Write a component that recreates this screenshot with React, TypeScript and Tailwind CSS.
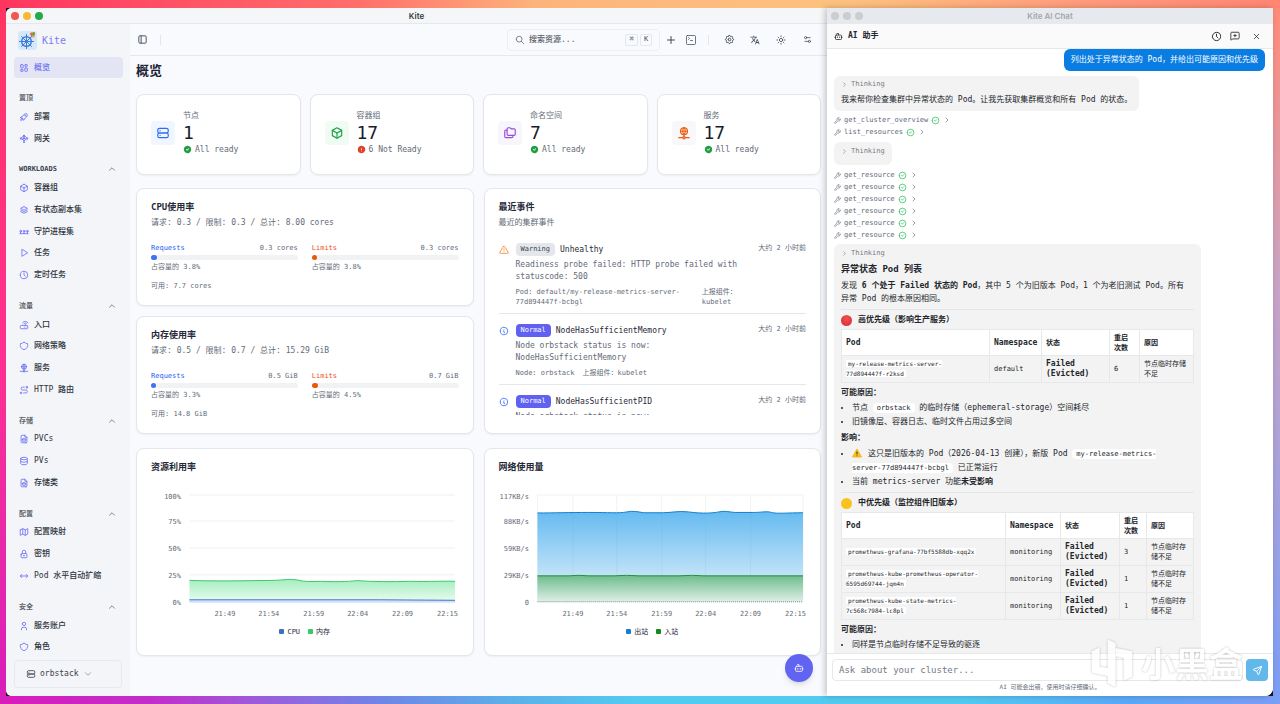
import type { ReactNode } from "react"
import type { IconType } from "react-icons"
import {
    TbAlertTriangle,
    TbArrowsHorizontal,
    TbBox,
    TbChevronDown,
    TbChevronRight,
    TbChevronUp,
    TbCircleCheck,
    TbCircleCheckFilled,
    TbClock,
    TbDatabase,
    TbExclamationCircleFilled,
    TbFileDatabase,
    TbFolders,
    TbInfoCircle,
    TbLayoutDashboard,
    TbLayoutSidebar,
    TbLoadBalancer,
    TbLock,
    TbMap,
    TbNetwork,
    TbPlayerPlay,
    TbPlus,
    TbRocket,
    TbRoute,
    TbRouter,
    TbSearch,
    TbSend,
    TbServer,
    TbSettings,
    TbShield,
    TbStack2,
    TbTopologyBus,
    TbUser,
} from "react-icons/tb"
import { MdTranslate } from "react-icons/md"
import { Bot, MessageSquarePlus, Settings2, SquareTerminal, Sun, Wrench, X } from "lucide-react"

type NavItem = { label: string; icon: IconType }
type NavSection = { title: string; dark?: boolean; pinned?: boolean; items: NavItem[] }

const sections: NavSection[] = [
    {
        title: "置顶",
        pinned: true,
        items: [
            { label: "部署", icon: TbRocket },
            { label: "网关", icon: TbLoadBalancer },
        ],
    },
    {
        title: "WORKLOADS",
        dark: true,
        items: [
            { label: "容器组", icon: TbBox },
            { label: "有状态副本集", icon: TbStack2 },
            { label: "守护进程集", icon: TbTopologyBus },
            { label: "任务", icon: TbPlayerPlay },
            { label: "定时任务", icon: TbClock },
        ],
    },
    {
        title: "流量",
        items: [
            { label: "入口", icon: TbRouter },
            { label: "网络策略", icon: TbShield },
            { label: "服务", icon: TbNetwork },
            { label: "HTTP 路由", icon: TbRoute },
        ],
    },
    {
        title: "存储",
        items: [
            { label: "PVCs", icon: TbFileDatabase },
            { label: "PVs", icon: TbDatabase },
            { label: "存储类", icon: TbFileDatabase },
        ],
    },
    {
        title: "配置",
        items: [
            { label: "配置映射", icon: TbMap },
            { label: "密钥", icon: TbLock },
            { label: "Pod 水平自动扩缩", icon: TbArrowsHorizontal },
        ],
    },
    {
        title: "安全",
        items: [
            { label: "服务账户", icon: TbUser },
            { label: "角色", icon: TbShield },
        ],
    },
]

const stats = [
    { label: "节点", value: 1, status: "All ready", ok: true, icon: TbServer, tone: "bg-[#eff6ff] text-[#2f6bf0]" },
    { label: "容器组", value: 17, status: "6 Not Ready", ok: false, icon: TbBox, tone: "bg-[#effcf3] text-[#22a34a]" },
    { label: "命名空间", value: 7, status: "All ready", ok: true, icon: TbFolders, tone: "bg-[#f8f6fd] text-[#9b4be0]" },
    { label: "服务", value: 17, status: "All ready", ok: true, icon: TbNetwork, tone: "bg-[#f8f8fa] text-[#ee5a12]" },
]

const usages = [
    {
        title: "CPU使用率",
        summary: "请求: 0.3 / 限制: 0.3 / 总计: 8.00 cores",
        requests: { value: "0.3 cores", percent: 3.8 },
        limits: { value: "0.3 cores", percent: 3.8 },
        available: "可用: 7.7 cores",
    },
    {
        title: "内存使用率",
        summary: "请求: 0.5 / 限制: 0.7 / 总计: 15.29 GiB",
        requests: { value: "0.5 GiB", percent: 3.3 },
        limits: { value: "0.7 GiB", percent: 4.5 },
        available: "可用: 14.8 GiB",
    },
]

const events = [
    {
        warning: true,
        reason: "Unhealthy",
        message: "Readiness probe failed: HTTP probe failed with statuscode: 500",
        object: "Pod: default/my-release-metrics-server-77d894447f-bcbgl",
    },
    {
        warning: false,
        reason: "NodeHasSufficientMemory",
        message: "Node orbstack status is now: NodeHasSufficientMemory",
        object: "Node: orbstack",
    },
    {
        warning: false,
        reason: "NodeHasSufficientPID",
        message: "Node orbstack status is now: NodeHasSufficientPID",
        object: "Node: orbstack",
    },
]

const ticks = [
    { x: 74, label: "21:49" },
    { x: 118, label: "21:54" },
    { x: 163, label: "21:59" },
    { x: 207, label: "22:04" },
    { x: 252, label: "22:09" },
    { x: 297, label: "22:15" },
]

const gridLines = [11, 37, 64, 91, 118]

function Lights({ muted }: { muted?: boolean }) {
    return (
        <div className="flex gap-1">
            <span className={`size-2 rounded-full ${muted ? "bg-[#cbcdcf]" : "bg-[#f1584f]"}`} />
            <span className={`size-2 rounded-full ${muted ? "bg-[#cbcdcf]" : "bg-[#f6b92f]"}`} />
            <span className={`size-2 rounded-full ${muted ? "bg-[#cbcdcf]" : "bg-[#22ab48]"}`} />
        </div>
    )
}

function Logo() {
    return (
        <svg viewBox="0 0 38 38" className="size-[19px]" fill="none">
            <rect width="38" height="38" rx="7" fill="#d5e8fa" />
            <path d="M24 4l9-2 1 9-7 3z" fill="#e9a23b" />
            <path d="M29 3l4-1 1 5-4 2z" fill="#4f9e5e" />
            <path d="M24 4l4-1 2 5-4 2z" fill="#d9605a" />
            <circle cx="17" cy="21" r="9.500" stroke="#3b7ddb" strokeWidth="3" />
            <circle cx="17" cy="21" r="3.500" fill="#3b7ddb" />
            <path
                d="M17 7v28M3 21h28M7 11l20 20M27 11L7 31"
                stroke="#3b7ddb"
                strokeWidth="2"
                strokeLinecap="round"
            />
        </svg>
    )
}

function Sidebar() {
    return (
        <aside className="flex w-[124px] shrink-0 flex-col bg-[#f4f5f8] px-2 pb-2">
            <div className="flex h-8 items-center gap-[5px] px-1">
                <Logo />
                <span className="text-[10px] font-medium text-[#7c7df2]">Kite</span>
            </div>
            <a
                href="#overview"
                className="mt-px flex h-[21px] w-[109px] shrink-0 items-center gap-[5px] rounded bg-[#e3e5f5] px-[5px] text-[8px] font-medium text-[#6d6ef0]"
            >
                <TbLayoutDashboard className="size-2.5" />
                概览
            </a>
            <nav className="flex min-h-0 flex-1 flex-col">
                {sections.map((section) => (
                    <section key={section.title} className="contents">
                        <div className="flex h-7 shrink-0 items-start justify-between pt-3 pr-[5px] pl-[5px] leading-4">
                            <h2
                                className={`text-[7px] font-bold ${section.dark ? "text-[#39424f]" : "text-[#62666e]"}`}
                            >
                                {section.title}
                            </h2>
                            {!section.pinned && <TbChevronUp className="mt-[3px] size-2.5 text-[#6b7280]" />}
                        </div>
                        <ul className="contents">
                            {section.items.map((item) => (
                                <li key={item.label} className="flex flex-1 items-center">
                                    <a
                                        href={`#${item.label}`}
                                        className="flex items-center gap-[5px] pl-[5px] text-[8px] leading-3 font-medium text-[#2b3340]"
                                    >
                                        <item.icon className="size-2.5 text-[#6f70f2]" />
                                        {item.label}
                                    </a>
                                </li>
                            ))}
                        </ul>
                    </section>
                ))}
            </nav>
            <button
                type="button"
                className="mt-0.5 flex h-7 w-[108px] shrink-0 items-center gap-1 rounded border border-[#e6e9ee] px-[11px] text-[8px] font-medium text-[#39424f]"
            >
                <TbServer className="size-2.5" />
                orbstack
                <TbChevronDown className="size-2.5 text-[#8b929c]" />
            </button>
        </aside>
    )
}

function IconButton({ label, children }: { label: string; children: ReactNode }) {
    return (
        <button type="button" aria-label={label} className="flex h-5 w-[26px] items-center justify-center">
            {children}
        </button>
    )
}

function Header() {
    return (
        <header className="flex h-8 shrink-0 items-center border-b border-[#e6e8ec] px-[7px] text-[#414a58]">
            <button type="button" aria-label="Toggle sidebar">
                <TbLayoutSidebar className="size-[11px]" />
            </button>
            <span className="ml-3 h-2.5 w-px bg-[#e2e5ea]" />
            <label className="mr-px ml-auto flex h-[22px] w-[153px] items-center rounded border border-[#eceef2] px-[7px]">
                <TbSearch className="size-[10px] shrink-0 text-[#6b7280]" />
                <input
                    aria-label="搜索资源"
                    placeholder="搜索资源..."
                    className="ml-1 w-full min-w-0 bg-transparent text-[8px] font-medium outline-none placeholder:text-[#59606c]"
                />
                <kbd className="flex h-3 w-[13px] shrink-0 items-center justify-center rounded-xs border border-[#e4e7eb] font-['DejaVu_Sans_Mono',monospace] text-[7px]">
                    ⌘
                </kbd>
                <kbd className="ml-0.5 flex h-3 w-3 shrink-0 items-center justify-center rounded-xs border border-[#e4e7eb] font-['DejaVu_Sans_Mono',monospace] text-[7px]">
                    K
                </kbd>
            </label>
            <button type="button" aria-label="Create" className="flex w-5 justify-center">
                <TbPlus className="size-3" />
            </button>
            <button type="button" aria-label="Terminal" className="flex w-5 justify-center">
                <SquareTerminal className="size-3" strokeWidth={1.5} />
            </button>
            <span className="mx-[7px] h-2.5 w-px bg-[#e2e5ea]" />
            <IconButton label="Settings">
                <TbSettings className="size-[11px]" />
            </IconButton>
            <IconButton label="Language">
                <MdTranslate className="size-[10px]" />
            </IconButton>
            <IconButton label="Theme">
                <Sun className="size-[10px]" />
            </IconButton>
            <IconButton label="Preferences">
                <Settings2 className="size-[9px]" />
            </IconButton>
        </header>
    )
}

function Card({ title, children }: { title: string; children: ReactNode }) {
    return (
        <section className="rounded-lg border border-[#e3e6eb] bg-white px-3.5 pt-3 shadow-xs">
            <h2 className="text-[9px] leading-3 font-bold text-[#1f2937]">{title}</h2>
            {children}
        </section>
    )
}

function UsageBar({ name, value, percent, limit }: { name: string; value: string; percent: number; limit?: boolean }) {
    return (
        <div className="flex-1 text-[7px] text-[#636b78]">
            <div className="flex justify-between leading-[11px]">
                <span className={limit ? "font-medium text-[#ea4f1c]" : "font-medium text-[#2b63ea]"}>{name}</span>
                <span>{value}</span>
            </div>
            <div className="mt-px h-[5px] rounded-full bg-[#f1f2f4]">
                <div
                    className={`h-full min-w-[5px] rounded-full ${limit ? "bg-[#ea580c]" : "bg-[#3b73f2]"}`}
                    style={{ width: `${percent}%` }}
                />
            </div>
            <p className="mt-0.5 leading-[10px]">占容量的 {percent}%</p>
        </div>
    )
}

function EventRow({ event }: { event: (typeof events)[number] }) {
    return (
        <li className="flex items-start gap-[7px] border-b border-[#e3e6eb] pt-2.5 pb-1.5 first:pt-0">
            {event.warning ? (
                <TbAlertTriangle className="mt-0.5 size-[10px] shrink-0 text-[#f08a35]" />
            ) : (
                <TbInfoCircle className="mt-0.5 size-[10px] shrink-0 text-[#3b73f2]" />
            )}
            <div className="min-w-0 flex-1">
                <div className="flex items-center gap-[5px]">
                    <span
                        className={`flex h-[13px] items-center rounded-sm px-[5px] text-[7px] font-medium ${event.warning ? "bg-[#e3e7eb] text-[#39424f]" : "bg-[#6061f0] text-white"}`}
                    >
                        {event.warning ? "Warning" : "Normal"}
                    </span>
                    <span className="text-[8px] leading-3 font-medium text-[#1f2937]">{event.reason}</span>
                </div>
                <p className="mt-[3px] text-[8px] leading-3 text-[#636b78]">{event.message}</p>
                <div className="mt-1 flex gap-2 text-[7px] leading-[10px] text-[#636b78]">
                    <span>{event.object}</span>
                    <span>上报组件：kubelet</span>
                </div>
            </div>
            <time className="shrink-0 text-[7px] leading-[10px] text-[#636b78]">大约 2 小时前</time>
        </li>
    )
}

function Legend({ items }: { items: { label: string; color: string }[] }) {
    return (
        <div className="mt-1.5 mb-[18px] flex justify-center gap-2 text-[7px] leading-[10px] text-[#1f2937]">
            {items.map((item) => (
                <span key={item.label} className="flex items-center gap-[3px]">
                    <span className={`size-[5px] rounded-[1px] ${item.color}`} />
                    {item.label}
                </span>
            ))}
        </div>
    )
}

function ChartAxes({ labels }: { labels: string[] }) {
    return (
        <g fontSize="7" fill="#636b78">
            {labels.map((label, i) => (
                <text key={label} x="30" y={i === 0 ? 15 : gridLines[i] + 3} textAnchor="end">
                    {label}
                </text>
            ))}
            {ticks.map((tick) => (
                <text key={tick.label} x={tick.x} y="132" textAnchor="middle">
                    {tick.label}
                </text>
            ))}
        </g>
    )
}

function ResourceChart() {
    const memory = "M38.500 96.500 C60 97.500 90 97 125 96.500 C134 96 138 95 146 96 C152 97.500 156 98 170 97.500 C185 98 195 98 206 96.800 C225 98 240 98 260 97.500 C280 98 290 97 304.500 97.500"
    return (
        <svg viewBox="0 0 308 137" className="mt-[11px] w-full">
            <defs>
                <linearGradient id="memory" x1="0" y1="0" x2="0" y2="1">
                    <stop offset="0" stopColor="#4ade80" stopOpacity="0.5" />
                    <stop offset="1" stopColor="#4ade80" stopOpacity="0.12" />
                </linearGradient>
            </defs>
            {gridLines.slice(0, 4).map((y) => (
                <path key={y} d={`M38.500 ${y}H304.500`} stroke="#eff0f2" />
            ))}
            <path d={`${memory} V118 H38.500 Z`} fill="url(#memory)" />
            <path d={memory} fill="none" stroke="#3cc96c" />
            <path d="M38.500 116.500H304.500V119H38.500Z" fill="#cfe0f7" />
            <path d="M38.500 116 H230 L304.500 116.500" fill="none" stroke="#3f73cc" />
            <ChartAxes labels={["100%", "75%", "50%", "25%", "0%"]} />
        </svg>
    )
}

function NetworkChart() {
    const out = "M38.500 29 C55 29 70 28.500 90 28.500 S120 29.500 128 28 C134 26.500 140 28 145 28.800 H165 C174 28.500 180 26.800 190 28 C205 30 215 29 220 28 C226 26.500 230 28 236 28.500 H255 C264 28.500 268 27 273 28.500 S290 28.800 304.500 28.800"
    return (
        <svg viewBox="0 0 308 137" className="mt-[11px] w-full">
            <defs>
                <linearGradient id="outbound" x1="0" y1="28" x2="0" y2="118" gradientUnits="userSpaceOnUse">
                    <stop offset="0" stopColor="#66bbf0" />
                    <stop offset="1" stopColor="#e6f3fc" />
                </linearGradient>
                <linearGradient id="inbound" x1="0" y1="92" x2="0" y2="118" gradientUnits="userSpaceOnUse">
                    <stop offset="0" stopColor="#6fbd8e" />
                    <stop offset="1" stopColor="#dff0e8" />
                </linearGradient>
            </defs>
            <path d="M38.500 11H304.500M38.500 11V118M304.500 11V118" stroke="#f0f1f3" />
            {ticks.slice(0, 5).map((tick) => (
                <path key={tick.x} d={`M${tick.x} 11V118`} stroke="#f0f1f3" />
            ))}
            <path d={`${out} V118 H38.500 Z`} fill="url(#outbound)" />
            {ticks.slice(0, 5).map((tick) => (
                <path key={tick.x} d={`M${tick.x} 30V91`} stroke="#5f9fd0" strokeOpacity="0.12" />
            ))}
            <path d={out} fill="none" stroke="#1380cf" />
            <path d="M38.500 92H304.500V118H38.500Z" fill="url(#inbound)" />
            <path
                d="M38.500 92 H70 Q80 91 90 92 H115 Q128 91 140 92 H180 Q195 91 205 92 H304.500"
                fill="none"
                stroke="#1b9433"
            />
            <path d="M38.500 118H304.500" stroke="#7d8792" strokeDasharray="1 1" />
            <ChartAxes labels={["117KB/s", "88KB/s", "59KB/s", "29KB/s", "0"]} />
        </svg>
    )
}

function Dashboard() {
    return (
        <main className="flex-1 overflow-hidden px-1.5 pt-1">
            <h1 className="text-[13px] leading-[22px] font-bold text-[#1b2433]">概览</h1>
            <div className="mt-3 grid grid-cols-4 gap-[9px]">
                {stats.map((stat) => (
                    <section
                        key={stat.label}
                        className="flex h-[81px] items-center gap-2 rounded-lg border border-[#e3e6eb] bg-white px-3.5 pb-1 shadow-xs"
                    >
                        <span className={`flex size-6 items-center justify-center rounded ${stat.tone}`}>
                            <stat.icon className="size-3.5" />
                        </span>
                        <div className="text-[8px] text-[#636b78]">
                            <p className="leading-3">{stat.label}</p>
                            <p className="text-[18px] leading-[22px] font-medium text-[#161d2b]">{stat.value}</p>
                            <p className="flex items-center gap-[3px] leading-3">
                                {stat.ok ? (
                                    <TbCircleCheckFilled className="size-[9px] text-[#1f9f43]" />
                                ) : (
                                    <TbExclamationCircleFilled className="size-[9px] text-[#e0402c]" />
                                )}
                                {stat.status}
                            </p>
                        </div>
                    </section>
                ))}
            </div>
            <div className="mt-[13px] grid grid-cols-2 gap-x-2.5 gap-y-3.5">
                <div className="flex flex-col gap-2.5">
                    {usages.map((usage) => (
                        <Card key={usage.title} title={usage.title}>
                            <p className="mt-1 text-[8px] leading-3 text-[#636b78]">{usage.summary}</p>
                            <div className="mt-3.5 flex gap-3.5">
                                <UsageBar name="Requests" {...usage.requests} />
                                <UsageBar name="Limits" {...usage.limits} limit />
                            </div>
                            <p className="mt-[9px] mb-3.5 text-[7px] leading-[10px] text-[#636b78]">
                                {usage.available}
                            </p>
                        </Card>
                    ))}
                </div>
                <Card title="最近事件">
                    <p className="mt-1 text-[8px] leading-3 text-[#636b78]">最近的集群事件</p>
                    <ul className="mt-3.5 h-[172px] overflow-hidden">
                        {events.map((event) => (
                            <EventRow key={event.reason} event={event} />
                        ))}
                    </ul>
                </Card>
                <Card title="资源利用率">
                    <ResourceChart />
                    <Legend
                        items={[
                            { label: "CPU", color: "bg-[#3d6fc9]" },
                            { label: "内存", color: "bg-[#36c96b]" },
                        ]}
                    />
                </Card>
                <Card title="网络使用量">
                    <NetworkChart />
                    <Legend
                        items={[
                            { label: "出站", color: "bg-[#1380cf]" },
                            { label: "入站", color: "bg-[#148a1c]" },
                        ]}
                    />
                </Card>
            </div>
        </main>
    )
}

function Thinking() {
    return (
        <button type="button" className="flex items-center gap-[3px] text-[7px] leading-[10px] text-[#757b85]">
            <TbChevronRight className="size-[7px]" />
            Thinking
        </button>
    )
}

function ToolCalls({ names }: { names: string[] }) {
    return (
        <ul className="flex flex-col text-[7px] leading-3 text-[#636b78]">
            {names.map((name, i) => (
                <li key={i}>
                    <button type="button" className="flex h-3 items-center gap-[3px]">
                        <Wrench className="size-[7px]" />
                        {name}
                        <TbCircleCheck className="size-[9px] text-[#2fc25f]" />
                        <TbChevronRight className="size-2" />
                    </button>
                </li>
            ))}
        </ul>
    )
}

function Code({ children }: { children: ReactNode }) {
    return (
        <code className="rounded-sm bg-white px-1 py-px font-['DejaVu_Sans_Mono',monospace] text-[7px]">
            {children}
        </code>
    )
}

function PodTable({
    rows,
    columns,
}: {
    rows: { pod: string; namespace: string; restarts: number }[]
    columns: string[]
}) {
    const cell = "border border-[#e6e8ea] px-1"
    return (
        <table className="mt-[3px] w-full table-fixed border-collapse text-left text-[7px] leading-[10px]">
            <colgroup>
                {columns.map((column, i) => (
                    <col key={i} className={column} />
                ))}
            </colgroup>
            <thead className="h-[26px] bg-white">
                <tr>
                    <th className={`${cell} text-[8px]`}>Pod</th>
                    <th className={`${cell} text-[8px]`}>Namespace</th>
                    <th className={cell}>状态</th>
                    <th className={cell}>
                        重启
                        <br />
                        次数
                    </th>
                    <th className={cell}>原因</th>
                </tr>
            </thead>
            <tbody>
                {rows.map((row) => (
                    <tr key={row.pod} className="h-[27px]">
                        <td className="border border-[#e6e8ea] pr-5 pl-1">
                            <code className="bg-white px-0.5 font-['DejaVu_Sans_Mono',monospace] text-[6px]">
                                {row.pod}
                            </code>
                        </td>
                        <td className={cell}>{row.namespace}</td>
                        <td className={`${cell} text-[8px]`}>
                            <strong>
                                Failed
                                <br />
                                (Evicted)
                            </strong>
                        </td>
                        <td className={cell}>{row.restarts}</td>
                        <td className={cell}>节点临时存储不足</td>
                    </tr>
                ))}
            </tbody>
        </table>
    )
}

function PriorityHeading({ color, children }: { color: string; children: ReactNode }) {
    return (
        <h4 className="mt-1 flex items-center gap-1.5 border-t border-[#e4e6e8] pt-1 text-[8px] leading-3 font-bold">
            <span className={`size-[11px] rounded-full ${color}`} />
            {children}
        </h4>
    )
}

function Report() {
    return (
        <article className="w-[367px] rounded-md bg-[#f3f3f3] px-[7px] pt-1 pb-3 text-[8px] leading-[13px] text-[#22252a]">
            <Thinking />
            <h3 className="mt-1 text-[9px] leading-[14px] font-bold">异常状态 Pod 列表</h3>
            <p className="mt-[3px] pr-1">
                发现 <strong>6 个处于 Failed 状态的 Pod</strong>，其中 5 个为旧版本 Pod，1 个为老旧测试 Pod。所有异常 Pod 的根本原因相同。
            </p>
            <PriorityHeading color="bg-radial-[at_50%_30%] from-[#ef5350] to-[#d9262f]">
                高优先级（影响生产服务）
            </PriorityHeading>
            <PodTable
                columns={["w-[148px]", "w-[52px]", "w-[68px]", "w-[30px]", ""]}
                rows={[{ pod: "my-release-metrics-server-77d894447f-r2ksd", namespace: "default", restarts: 6 }]}
            />
            <p className="mt-[3px] font-bold">可能原因：</p>
            <ul className="mt-0.5 list-disc pl-[11px] leading-3.5">
                <li>
                    节点 <Code>orbstack</Code> 的临时存储（ephemeral-storage）空间耗尽
                </li>
                <li>旧镜像层、容器日志、临时文件占用过多空间</li>
            </ul>
            <p className="mt-0.5 font-bold">影响：</p>
            <ul className="mt-[3px] list-disc pr-4 pl-[11px] leading-[13px]">
                <li>
                    <svg viewBox="0 0 20 18" className="mr-1.5 inline size-[10px] align-[-2px]">
                        <path d="M10 1L19 17H1Z" fill="#fbbf24" stroke="#f5b81c" strokeWidth="2" strokeLinejoin="round" />
                        <path d="M10 6v6M10 14v1.500" stroke="#333" strokeWidth="2" />
                    </svg>
                    这只是旧版本的 Pod（2026-04-13 创建），新版 Pod <Code>my-release-metrics-server-77d894447f-bcbgl</Code>{" "}
                    已正常运行
                </li>
                <li>
                    当前 metrics-server 功能<strong>未受影响</strong>
                </li>
            </ul>
            <PriorityHeading color="bg-[#fbc21e]">中优先级（监控组件旧版本）</PriorityHeading>
            <PodTable
                columns={["w-[164px]", "w-[55px]", "w-[59px]", "w-[27px]", ""]}
                rows={[
                    { pod: "prometheus-grafana-77bf5588db-xqq2x", namespace: "monitoring", restarts: 3 },
                    { pod: "prometheus-kube-prometheus-operator-6595d69744-jqm4n", namespace: "monitoring", restarts: 1 },
                    { pod: "prometheus-kube-state-metrics-7c568c7984-lc8pl", namespace: "monitoring", restarts: 1 },
                ]}
            />
            <p className="mt-[3px] font-bold">可能原因：</p>
            <ul className="mt-0.5 list-disc pl-[11px]">
                <li>同样是节点临时存储不足导致的驱逐</li>
            </ul>
        </article>
    )
}

function ChatWindow() {
    return (
        <div className="relative z-10 flex min-w-0 flex-[446] flex-col overflow-hidden rounded-br-lg bg-white shadow-[-2px_0_6px_rgba(0,0,0,0.22)]">
            <div className="relative flex h-4 shrink-0 items-center bg-[#e6eaee] px-1">
                <Lights muted />
                <span className="absolute inset-x-0 text-center font-[Inter,sans-serif] text-[8px] font-semibold text-[#a3a7ab]">
                    Kite AI Chat
                </span>
            </div>
            <header className="flex h-[25px] shrink-0 items-center border-b border-[#e6e8ea] bg-[#fafafa] pr-3 pl-[7px] text-[#22252a]">
                <Bot className="size-[9px]" />
                <h2 className="ml-[5px] text-[8px] font-bold">AI 助手</h2>
                <div className="ml-auto flex items-center gap-2">
                    <button type="button" aria-label="History">
                        <TbClock className="size-[11px]" />
                    </button>
                    <button type="button" aria-label="New chat">
                        <MessageSquarePlus className="size-[10px]" />
                    </button>
                    <button type="button" aria-label="Close" className="ml-1">
                        <X className="size-[9px]" />
                    </button>
                </div>
            </header>
            <div className="flex min-h-0 flex-1 flex-col items-start overflow-hidden px-[7px]">
                <p className="mr-px flex h-[22px] shrink-0 items-center self-end rounded-md bg-[#0a7de2] px-[7px] text-[8px] text-white">
                    列出处于异常状态的 Pod，并给出可能原因和优先级
                </p>
                <div className="mt-[5px] h-[35px] shrink-0 rounded-md bg-[#f3f3f3] px-[7px] pt-[3px] text-[8px] text-[#22252a]">
                    <Thinking />
                    <p className="mt-1 leading-[14px]">
                        我来帮你检查集群中异常状态的 Pod。让我先获取集群概览和所有 Pod 的状态。
                    </p>
                </div>
                <div className="mt-[3px] shrink-0">
                    <ToolCalls names={["get_cluster_overview", "list_resources"]} />
                </div>
                <div className="mt-1 h-[23px] shrink-0 rounded-md bg-[#f3f3f3] px-[7px] pt-1">
                    <Thinking />
                </div>
                <div className="mt-1 shrink-0">
                    <ToolCalls names={Array(6).fill("get_resource")} />
                </div>
                <div className="mt-[3px] shrink-0">
                    <Report />
                </div>
            </div>
            <footer className="shrink-0 border-t border-[#e6e8ea] bg-white px-[5px] pt-[5px]">
                <form className="flex items-center gap-[3px]">
                    <input
                        aria-label="Ask about your cluster"
                        placeholder="Ask about your cluster..."
                        className="h-[22px] min-w-0 flex-1 rounded border border-[#e6e8ea] px-1.5 text-[9px] outline-none placeholder:text-[#737985]"
                    />
                    <button
                        type="submit"
                        aria-label="Send"
                        className="flex size-[22px] items-center justify-center rounded bg-[#62b8ea] text-white"
                    >
                        <TbSend className="size-[11px]" />
                    </button>
                </form>
                <p className="mb-[3px] text-center text-[6px] leading-3 text-[#636b78]">
                    AI 可能会出错，使用时请仔细确认。
                </p>
            </footer>
            <div className="pointer-events-none absolute right-[30px] bottom-2 flex items-center gap-2 text-white opacity-80 drop-shadow-[0_0_1px_rgba(0,0,0,0.3)]">
                <svg viewBox="0 0 126 150" className="h-[50px] w-[42px]" fill="currentColor">
                    <path d="M2 40L26 28V86L50 90V4L74 16V148L50 136V114L2 104Z" />
                    <path d="M74 30L124 40V116L98 128V60L74 54Z" />
                </svg>
                <span className="font-['Noto_Sans_CJK_SC',sans-serif] text-[34px] leading-none font-bold">小黑盒</span>
            </div>
        </div>
    )
}

export default function App() {
    return (
        <div className="flex h-screen flex-col overflow-hidden font-['DejaVu_Sans_Mono','Noto_Sans_CJK_SC',monospace]">
            <div className="h-2 shrink-0 bg-[linear-gradient(90deg,#ff3560,#ff6f6a_28%,#fdb47c_42%,#fdc27e_66%,#ff9a7c_85%,#ff8672)]" />
            <div className="flex min-h-0 flex-1">
                <div className="w-1.5 shrink-0 bg-linear-to-b from-[#ff3560] via-[#ff2f90] to-[#d81cba]" />
                <div className="flex min-w-0 flex-1 bg-[#111827]">
                    <div className="flex min-w-0 flex-[821] flex-col overflow-hidden rounded-l-md bg-[#f9fafd]">
                        <div className="relative flex h-4 shrink-0 items-center border-b border-[#e6e8ec] bg-[#f5f6f8] px-[5px]">
                            <Lights />
                            <span className="absolute inset-x-0 text-center font-[Inter,sans-serif] text-[8px] font-semibold text-[#33373d]">
                                Kite
                            </span>
                        </div>
                        <div className="flex min-h-0 flex-1">
                            <Sidebar />
                            <div className="relative flex min-w-0 flex-1 flex-col">
                                <Header />
                                <Dashboard />
                                <button
                                    type="button"
                                    aria-label="AI 助手"
                                    className="absolute right-3.5 bottom-3.5 flex size-7 items-center justify-center rounded-full bg-[#6163f1] text-white shadow-md"
                                >
                                    <Bot className="size-[10px]" />
                                </button>
                            </div>
                        </div>
                    </div>
                    <ChatWindow />
                </div>
                <div className="w-[7px] shrink-0 bg-linear-to-b from-[#ff8a78] via-[#c9a3c4] via-40% to-[#7b9df5]" />
            </div>
            <div className="h-2 shrink-0 bg-[linear-gradient(90deg,#d81cba,#c12ecb_12%,#9d5bdb_20%,#6f86e6_30%,#5cb0e8_40%,#52cbf1_50%,#52cbf1_75%,#5aa8f8_88%,#7b9df5)]" />
        </div>
    )
}
